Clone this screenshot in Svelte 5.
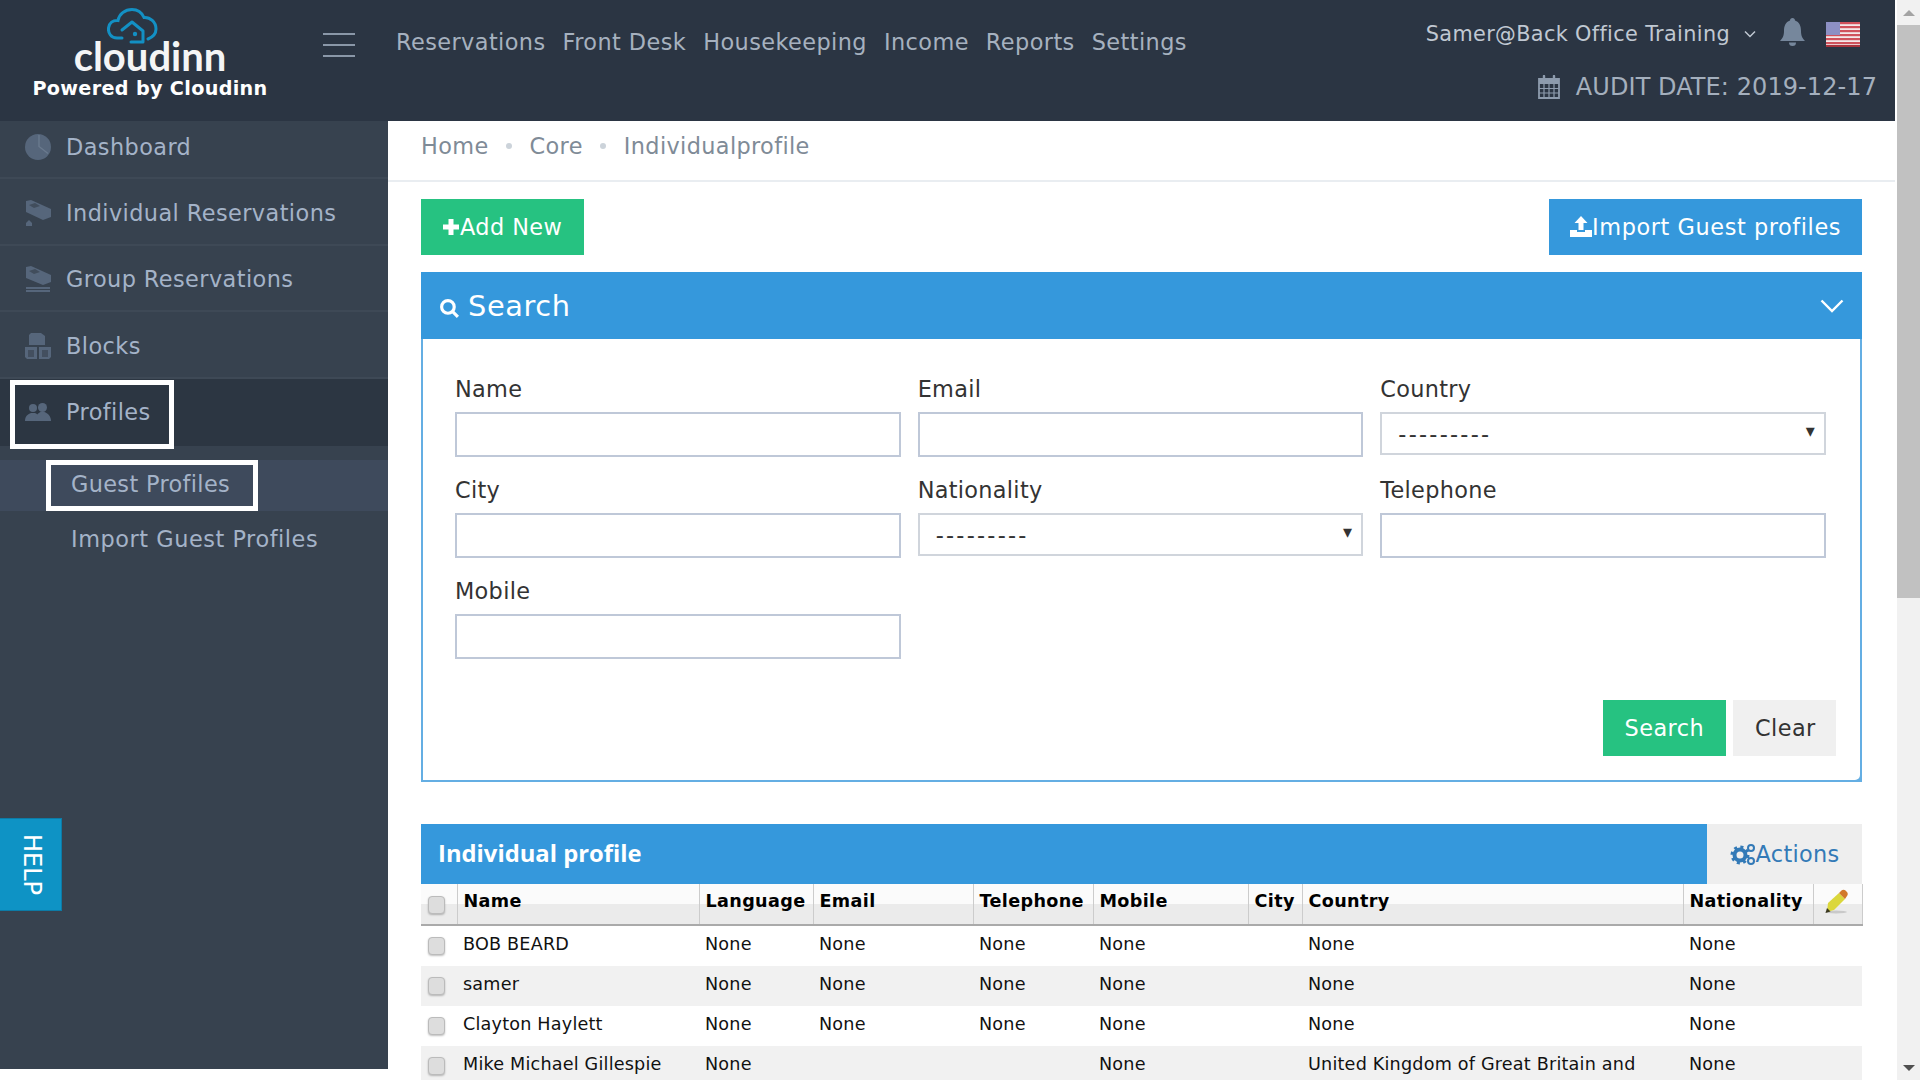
<script>
  const nav = ['Reservations', 'Front Desk', 'Housekeeping', 'Income', 'Reports', 'Settings'];
  const sideItems = [
    { label: 'Dashboard', icon: 'pie' },
    { label: 'Individual Reservations', icon: 'bed' },
    { label: 'Group Reservations', icon: 'beds' },
    { label: 'Blocks', icon: 'blocks' }
  ];
  const cols = [
    { label: '', w: 36 },
    { label: 'Name', w: 242 },
    { label: 'Language', w: 114 },
    { label: 'Email', w: 160 },
    { label: 'Telephone', w: 120 },
    { label: 'Mobile', w: 155 },
    { label: 'City', w: 54 },
    { label: 'Country', w: 381 },
    { label: 'Nationality', w: 130 },
    { label: '', w: 49 }
  ];
  const rows = [
    ['BOB BEARD', 'None', 'None', 'None', 'None', '', 'None', 'None'],
    ['samer', 'None', 'None', 'None', 'None', '', 'None', 'None'],
    ['Clayton Haylett', 'None', 'None', 'None', 'None', '', 'None', 'None'],
    ['Mike Michael Gillespie', 'None', '', '', 'None', '', 'United Kingdom of Great Britain and Northern Ireland', 'None']
  ];
</script>

<div class="page">
  <div class="viewport">
    <header class="topbar">
      <div class="brand">
        <svg class="cloud" viewBox="0 0 52 36" width="52" height="36" aria-hidden="true">
          <path d="M15 30 H10 C4 30 1 25 1.500 20 C2 15 6 12 11 12.500 C12 6 18 1.500 25 1.500 C31 1.500 35 5 37 9.500 C43 9 49 14 49 21 C49 26 46 29 41 31" fill="none" stroke="#1390c4" stroke-width="3" stroke-linecap="round"/>
          <path d="M15 22 L25 14 L36 23 V34 H24" fill="none" stroke="#1390c4" stroke-width="3" stroke-linejoin="round" stroke-linecap="round"/>
          <circle cx="28" cy="26" r="2.200" fill="#1390c4"/>
        </svg>
        <div class="wordmark">cloudinn</div>
        <div class="powered">Powered by Cloudinn</div>
      </div>
      <button class="burger" aria-label="Toggle menu"><span></span><span></span><span></span></button>
      <nav class="mainnav">
        {#each nav as item}
          <span>{item}</span>
        {/each}
      </nav>
      <div class="topright">
        <div class="userline">
          <span class="user">Samer@Back Office Training</span>
          <svg class="caret" viewBox="0 0 12 8" width="12" height="8" aria-hidden="true"><path d="M1 1.500l5 5 5-5" fill="none" stroke="#c0c8d2" stroke-width="1.500"/></svg>
          <svg class="bell" viewBox="0 0 26 30" width="27" height="30" aria-hidden="true">
            <path d="M13 1c1.500 0 2.500 1 2.500 2.500C20 5 21.500 9 21.500 14c0 5 1.500 7.500 4 10H.5c2.500-2.500 4-5 4-10C4.500 9 6 5 10.500 3.500 10.500 2 11.500 1 13 1z" fill="#76879c"/>
            <path d="M9.500 25.500a3.500 3.500 0 0 0 7 0z" fill="#76879c"/>
          </svg>
          <svg class="flag" viewBox="0 0 34 25" width="34" height="25" aria-hidden="true">
            <rect width="34" height="25" fill="#f3e9ea"/>
            {#each [0, 4, 8, 12, 16, 20] as y}
              <rect y={y} width="34" height="2.200" fill="#d0525c"/>
            {/each}
            <rect y="23" width="34" height="2" fill="#a8323c"/>
            <rect width="14" height="13" fill="#8d90c4"/>
          </svg>
        </div>
        <div class="audit">
          <svg viewBox="0 0 22 24" width="22" height="24" aria-hidden="true">
            <path d="M1 4h20v19H1z" fill="none" stroke="#8d9bad" stroke-width="1.800"/>
            <path d="M1 4h20v5H1z" fill="#8d9bad"/>
            <path d="M6 1v6M16 1v6" stroke="#8d9bad" stroke-width="2.400" stroke-linecap="round"/>
            <path d="M6 9v14M11 9v14M16 9v14M1 13.500h20M1 18h20" stroke="#8d9bad" stroke-width="1.200"/>
          </svg>
          <span>AUDIT DATE: 2019-12-17</span>
        </div>
      </div>
    </header>

    <div class="body">
      <aside class="sidebar">
        {#each sideItems as item}
          <div class="side-item">
            <svg class="side-icon" viewBox="0 0 26 26" width="26" height="26" aria-hidden="true">
              {#if item.icon === 'pie'}
                <circle cx="13" cy="13" r="13" fill="#56667b"/>
                <path d="M14 1v11.500l9 7" fill="none" stroke="#6a7a8e" stroke-width="1.400"/>
              {:else if item.icon === 'bed'}
                <path d="M1 1l5-1 20 9v8l-8 3-17-8z" fill="#56667b"/>
                <path d="M4 5l6-2 5 3-6 2z" fill="#414d5c"/>
                <path d="M1 23l3-3 3 3v3H1z" fill="#56667b"/>
              {:else if item.icon === 'beds'}
                <path d="M1 1l5-1 20 9v7l-8 3-17-7z" fill="#56667b"/>
                <path d="M4 5l6-2 5 3-6 2z" fill="#414d5c"/>
                <path d="M1 21h24v2H1zM1 24h24v2H1z" fill="#56667b"/>
              {:else}
                <path d="M6 0h10l4 3v9H4V2z" fill="#56667b"/>
                <path d="M0 14h12v12H2l-2-2zM14 14h12v10l-2 2H14z" fill="#56667b"/>
                <path d="M3 17h6v7H3zM17 17h6v7h-6z" fill="#434f5f"/>
              {/if}
            </svg>
            <span>{item.label}</span>
          </div>
        {/each}
        <div class="side-item active">
          <div class="boxed">
            <svg class="side-icon" viewBox="0 0 26 18" width="26" height="18" aria-hidden="true">
              <circle cx="8" cy="5" r="4" fill="#56667b"/>
              <path d="M0 18c0-5 3-7 6-8h4c3 1 4 3 4 8z" fill="#56667b"/>
              <circle cx="17.500" cy="4.500" r="4.500" fill="#56667b"/>
              <path d="M10 18c0-5 3-8 5.500-9h4c3 1 6.500 4 6.500 9z" fill="#56667b"/>
            </svg>
            <span>Profiles</span>
          </div>
        </div>
        <div class="sub">
          <div class="sub-item current"><span class="boxed-sub">Guest Profiles</span></div>
          <div class="sub-item"><span class="plain-sub">Import Guest Profiles</span></div>
        </div>
        <div class="help"><span>HELP</span></div>
      </aside>

      <main class="content">
        <div class="crumbs">
          <span>Home</span><i></i><span>Core</span><i></i><span>Individualprofile</span>
        </div>
        <div class="inner">
          <div class="toolbar">
            <button class="btn green">
              <svg viewBox="0 0 18 18" width="18" height="18" aria-hidden="true"><path d="M6.500 1h5v5.500H17v5h-5.500V17h-5v-5.500H1v-5h5.500z" fill="#fff"/></svg>Add New
            </button>
            <button class="btn blue">
              <svg viewBox="0 0 22 22" width="22" height="22" aria-hidden="true"><path d="M11 0l6.500 7H13.500v7h-5V7H4.500z" fill="#fff"/><path d="M0 14h7v2h8v-2h7v7H0z" fill="#fff"/></svg>Import Guest profiles
            </button>
          </div>

          <section class="search">
            <div class="search-head">
              <svg viewBox="0 0 20 20" width="21" height="21" aria-hidden="true"><circle cx="8.500" cy="8.500" r="6" fill="none" stroke="#fff" stroke-width="3"/><path d="M13 13l5 5" stroke="#fff" stroke-width="3"/></svg>
              <h2>Search</h2>
              <svg class="chev" viewBox="0 0 24 14" width="24" height="14" aria-hidden="true"><path d="M1.500 1.500L12 12 22.500 1.500" fill="none" stroke="#fff" stroke-width="2.400"/></svg>
            </div>
            <div class="search-body">
              <div class="fields">
                <label><span>Name</span><input type="text" /></label>
                <label><span>Email</span><input type="text" /></label>
                <label><span>Country</span><div class="selectwrap"><select><option>---------</option></select></div></label>
                <label><span>City</span><input type="text" /></label>
                <label><span>Nationality</span><div class="selectwrap"><select><option>---------</option></select></div></label>
                <label><span>Telephone</span><input type="text" /></label>
                <label><span>Mobile</span><input type="text" /></label>
              </div>
              <div class="search-actions">
                <button class="btn green wide">Search</button>
                <button class="btn grey">Clear</button>
              </div>
            </div>
          </section>

          <section class="results">
            <div class="results-head">
              <h3>Individual profile</h3>
              <button class="actions">
                <svg viewBox="0 0 26 24" width="26" height="24" aria-hidden="true">
                  <circle cx="10" cy="13" r="5.500" fill="none" stroke="#337ab7" stroke-width="4"/>
                  <circle cx="10" cy="13" r="8" fill="none" stroke="#337ab7" stroke-width="3" stroke-dasharray="3 3.300"/>
                  <circle cx="21" cy="6" r="3" fill="none" stroke="#337ab7" stroke-width="2"/>
                  <circle cx="21" cy="19" r="3" fill="none" stroke="#337ab7" stroke-width="2"/>
                </svg>Actions
              </button>
            </div>
            <table>
              <colgroup>
                {#each cols as c}<col style:width="{c.w}px" />{/each}
              </colgroup>
              <thead>
                <tr>
                  <th class="check"><input type="checkbox" /></th>
                  {#each cols.slice(1, -1) as c}<th>{c.label}</th>{/each}
                  <th class="pencil">
                    <svg viewBox="0 0 28 26" width="28" height="26" aria-hidden="true">
                      <ellipse cx="15" cy="23" rx="11" ry="1.500" fill="#c9c9c9"/>
                      <path d="M7 14L18 4l6 6-11 11-7 2z" fill="#dbd73c"/>
                      <path d="M18 4l2.500-2.500c1-1 3-1 4 0l1.500 1.500c1 1 1 3 0 4L24 10z" fill="#d2792a"/>
                      <path d="M6 19l-1.500 5 5-1.500z" fill="#3c3a20"/>
                    </svg>
                  </th>
                </tr>
              </thead>
              <tbody>
                {#each rows as row}
                  <tr>
                    <td class="check"><input type="checkbox" /></td>
                    {#each row as cell}<td>{cell}</td>{/each}
                    <td></td>
                  </tr>
                {/each}
              </tbody>
            </table>
          </section>
        </div>
      </main>
    </div>
  </div>

  <div class="scrollbar" aria-hidden="true">
    <div class="arrow up"></div>
    <div class="track"><div class="thumb"></div></div>
    <div class="arrow down"></div>
  </div>
</div>

<style>
  :global(body) {
    margin: 0;
    background: #fff;
    overflow: hidden;
  }
  * {
    box-sizing: border-box;
  }
  .page {
    display: flex;
    height: 1080px;
    overflow: hidden;
    font-family: "DejaVu Sans", sans-serif;
    font-size: 22.4px;
    letter-spacing: 0.3px;
  }
  .viewport {
    width: 1895px;
    display: flex;
    flex-direction: column;
  }

  /* top bar */
  .topbar {
    height: 121px;
    flex: none;
    background: #2b3543;
    display: flex;
    position: relative;
  }
  .brand {
    width: 300px;
    display: flex;
    flex-direction: column;
    align-items: center;
    padding-top: 8px;
  }
  .cloud {
    display: block;
    margin-right: 34px;
  }
  .wordmark {
    font-family: Lato, sans-serif;
    font-weight: 700;
    font-size: 40px;
    line-height: 30px;
    margin-top: -3px;
    color: #f4f5f6;
    letter-spacing: 0;
  }
  .powered {
    color: #fff;
    font-weight: 700;
    font-size: 19.2px;
    letter-spacing: 0.33px;
    line-height: 24px;
    margin-top: 6px;
  }
  .burger {
    width: 32px;
    height: 24px;
    margin: 33px 0 0 23px;
    padding: 0;
    background: none;
    border: 0;
    display: flex;
    flex-direction: column;
    justify-content: space-between;
  }
  .burger span {
    display: block;
    height: 2px;
    background: #8a97a8;
  }
  .mainnav {
    display: flex;
    gap: 17px;
    margin-left: 41px;
    padding-top: 28px;
    color: #a6b1bf;
    line-height: 28px;
    letter-spacing: 0.42px;
  }
  .topright {
    margin-left: auto;
    padding: 18px 18px 0 0;
    display: flex;
    flex-direction: column;
    align-items: flex-end;
  }
  .userline {
    display: flex;
    align-items: center;
    height: 32px;
    padding-right: 17px;
    color: #c0c8d2;
    font-size: 20.8px;
    letter-spacing: 0.35px;
  }
  .caret {
    margin-left: 14px;
  }
  .bell {
    margin: -4px 0 0 23px;
  }
  .flag {
    margin-left: 20px;
  }
  .audit {
    display: flex;
    align-items: center;
    gap: 16px;
    margin-top: 21px;
    line-height: 32px;
    color: #a4afbd;
    font-size: 24px;
    letter-spacing: 0.08px;
  }

  .body {
    flex: 1;
    display: flex;
    min-height: 0;
  }

  /* sidebar */
  .sidebar {
    width: 388px;
    height: 948px;
    flex: none;
    background: #37424f;
    color: #a4b3c8;
    position: relative;
    letter-spacing: 0.42px;
  }
  .side-item {
    height: 66.5px;
    padding: 3px 0 0 25px;
    border-bottom: 2px solid #3e4956;
    display: flex;
    align-items: center;
    gap: 15px;
  }
  .side-item:first-child {
    height: 58px;
    padding: 0 0 5px 25px;
  }
  .side-icon {
    flex: none;
  }
  .side-item.active {
    background: #2c3642;
    height: 67px;
    padding: 0 0 0 10px;
    border: 0;
    align-items: flex-start;
  }
  .boxed {
    width: 164px;
    height: 69px;
    margin-top: 1px;
    border: 5px solid #fff;
    padding: 0 0 4px 10px;
    display: flex;
    align-items: center;
    gap: 15px;
  }
  .sub {
    padding-top: 14px;
  }
  .sub-item {
    height: 51px;
    display: flex;
    align-items: center;
    padding-left: 46px;
  }
  .sub-item.current {
    background: #3e4a5c;
    margin-bottom: 3px;
  }
  .boxed-sub {
    width: 212px;
    height: 51px;
    border: 5px solid #fff;
    padding-left: 20px;
    line-height: 39px;
    letter-spacing: 0.35px;
  }
  .plain-sub {
    padding-left: 25px;
    letter-spacing: 0.55px;
  }
  .help {
    position: absolute;
    left: 0;
    top: 697px;
    width: 62px;
    height: 93px;
    padding-left: 3px;
    background: #0e93c5;
    border: 1px solid #0c7ba6;
    border-left: 0;
    color: #fff;
    display: flex;
    align-items: center;
    justify-content: center;
  }
  .help span {
    writing-mode: vertical-rl;
    font-size: 24px;
    letter-spacing: 0;
  }

  /* main */
  .content {
    flex: 1;
    min-width: 0;
  }
  .crumbs {
    height: 61px;
    border-bottom: 2px solid #e9edf1;
    padding: 0 33px 9px;
    display: flex;
    align-items: center;
    color: #7f8b97;
    letter-spacing: 0.36px;
  }
  .crumbs i {
    width: 6px;
    height: 6px;
    border-radius: 50%;
    background: #ccd3da;
    margin: 0 17.500px;
  }
  .inner {
    padding: 17px 33px 0;
  }
  .toolbar {
    display: flex;
    justify-content: space-between;
  }
  .btn {
    height: 56px;
    border: 0;
    padding: 0 21px;
    font: inherit;
    letter-spacing: 0.42px;
    display: inline-flex;
    align-items: center;
  }
  .toolbar .btn.green {
    padding-right: 22px;
  }
  .btn.green {
    background: #26c281;
    color: #fff;
  }
  .btn.wide {
    padding: 0 22px;
  }
  .btn.blue {
    background: #3598dc;
    color: #fff;
    letter-spacing: 0.58px;
  }
  .btn.grey {
    background: #f0f0f0;
    color: #333;
    padding: 0 22px;
    width: 103px;
  }

  .search {
    margin-top: 17px;
    height: 510px;
    border: 2px solid #64aee3;
    border-top: 0;
    background: #64aee3;
    display: flex;
    flex-direction: column;
  }
  .search-head {
    height: 67px;
    margin: 0 -2px;
    padding: 0 18px 0 18px;
    background: #3598dc;
    color: #fff;
    display: flex;
    align-items: center;
    gap: 8px;
  }
  .search-head > svg:first-child {
    margin-top: 6px;
  }
  .search-head h2 {
    margin: 0;
    font-size: 28.8px;
    font-weight: 400;
    letter-spacing: 0.6px;
  }
  .chev {
    margin-left: auto;
  }
  .search-body {
    flex: 1;
    padding: 33px 34px 0 32px;
    background: #fff;
    border-bottom-right-radius: 5px;
  }
  .fields {
    display: grid;
    grid-template-columns: repeat(3, 1fr);
    column-gap: 17px;
    row-gap: 0;
  }
  .fields label {
    display: block;
    height: 101px;
    color: #333;
  }
  .fields label span {
    display: block;
    height: 40px;
    line-height: 34px;
  }
  .fields input {
    display: block;
    width: 100%;
    height: 45px;
    border: 2px solid #bfc8d8;
    background: #fff;
  }
  .selectwrap {
    position: relative;
  }
  .selectwrap::after {
    content: "▾";
    position: absolute;
    right: 11px;
    top: 8px;
    font-size: 18px;
    color: #333;
    pointer-events: none;
  }
  .selectwrap select {
    display: block;
    width: 100%;
    height: 43px;
    appearance: none;
    border: 2px solid #d0d5dc;
    border-radius: 0;
    background: #fff;
    padding: 0 16px;
    font-family: inherit;
    font-size: 22.4px;
    letter-spacing: 2.25px;
    color: #333;
  }
  .search-actions {
    display: flex;
    justify-content: flex-end;
    gap: 7px;
    margin: 25px -10px 0 0;
  }

  .results {
    margin-top: 42px;
  }
  .results-head {
    display: flex;
    height: 60px;
  }
  .results-head h3 {
    flex: 1;
    margin: 0;
    padding: 0 17px 0;
    background: #3598dc;
    color: #fff;
    font-size: 23.8px;
    font-weight: 700;
    line-height: 58px;
    letter-spacing: 0;
    font-family: "Open Sans", sans-serif;
  }
  .actions {
    width: 155px;
    border: 0;
    background: #eee;
    color: #337ab7;
    font: inherit;
    letter-spacing: 0.3px;
    display: flex;
    align-items: center;
    justify-content: center;
    padding: 0;
  }
  table {
    width: 1441px;
    table-layout: fixed;
    border-collapse: collapse;
    font-size: 17.6px;
    letter-spacing: 0.2px;
    color: #111;
  }
  th {
    height: 41px;
    padding: 0 6px 6px;
    text-align: left;
    color: #000;
    font-weight: 700;
    letter-spacing: 0.35px;
    border-left: 1px solid #ccc;
    border-bottom: 2px solid #aaa;
    background: linear-gradient(#fbfbfb 50%, #ebebeb 50%);
    white-space: nowrap;
    overflow: hidden;
  }
  th:first-child {
    border-left: 0;
  }
  th.pencil {
    padding: 0 0 4px 7px;
    border-right: 1px solid #ccc;
  }
  th.pencil svg {
    display: block;
  }
  td {
    padding: 6px 6px 10px;
    height: 40px;
    line-height: 24px;
    vertical-align: top;
  }
  tbody tr:nth-child(even) td {
    background: #f1f1f1;
  }
  .check {
    padding: 0 0 0 7px;
  }
  td.check {
    padding-top: 11px;
  }
  th.check {
    padding: 2px 0 0 7px;
  }
  input[type="checkbox"] {
    appearance: none;
    display: block;
    width: 17px;
    height: 18px;
    margin: 0;
    border: 1px solid #bbb;
    border-radius: 4px;
    background: #ddd;
    box-shadow: 0 1px 2px rgba(0, 0, 0, 0.25);
  }

  /* page scrollbar */
  .scrollbar {
    width: 25px;
    flex: none;
    background: #f1f1f1;
    display: flex;
    flex-direction: column;
    border-left: 2px solid #fff;
  }
  .arrow {
    height: 25px;
    flex: none;
    display: flex;
    align-items: center;
    justify-content: center;
  }
  .arrow::before {
    content: "";
    border-left: 6px solid transparent;
    border-right: 6px solid transparent;
  }
  .arrow.up::before {
    border-bottom: 6px solid #a3a3a3;
  }
  .arrow.down::before {
    border-top: 6px solid #505050;
  }
  .track {
    flex: 1;
  }
  .thumb {
    height: 573px;
    background: #c1c1c1;
  }
</style>
